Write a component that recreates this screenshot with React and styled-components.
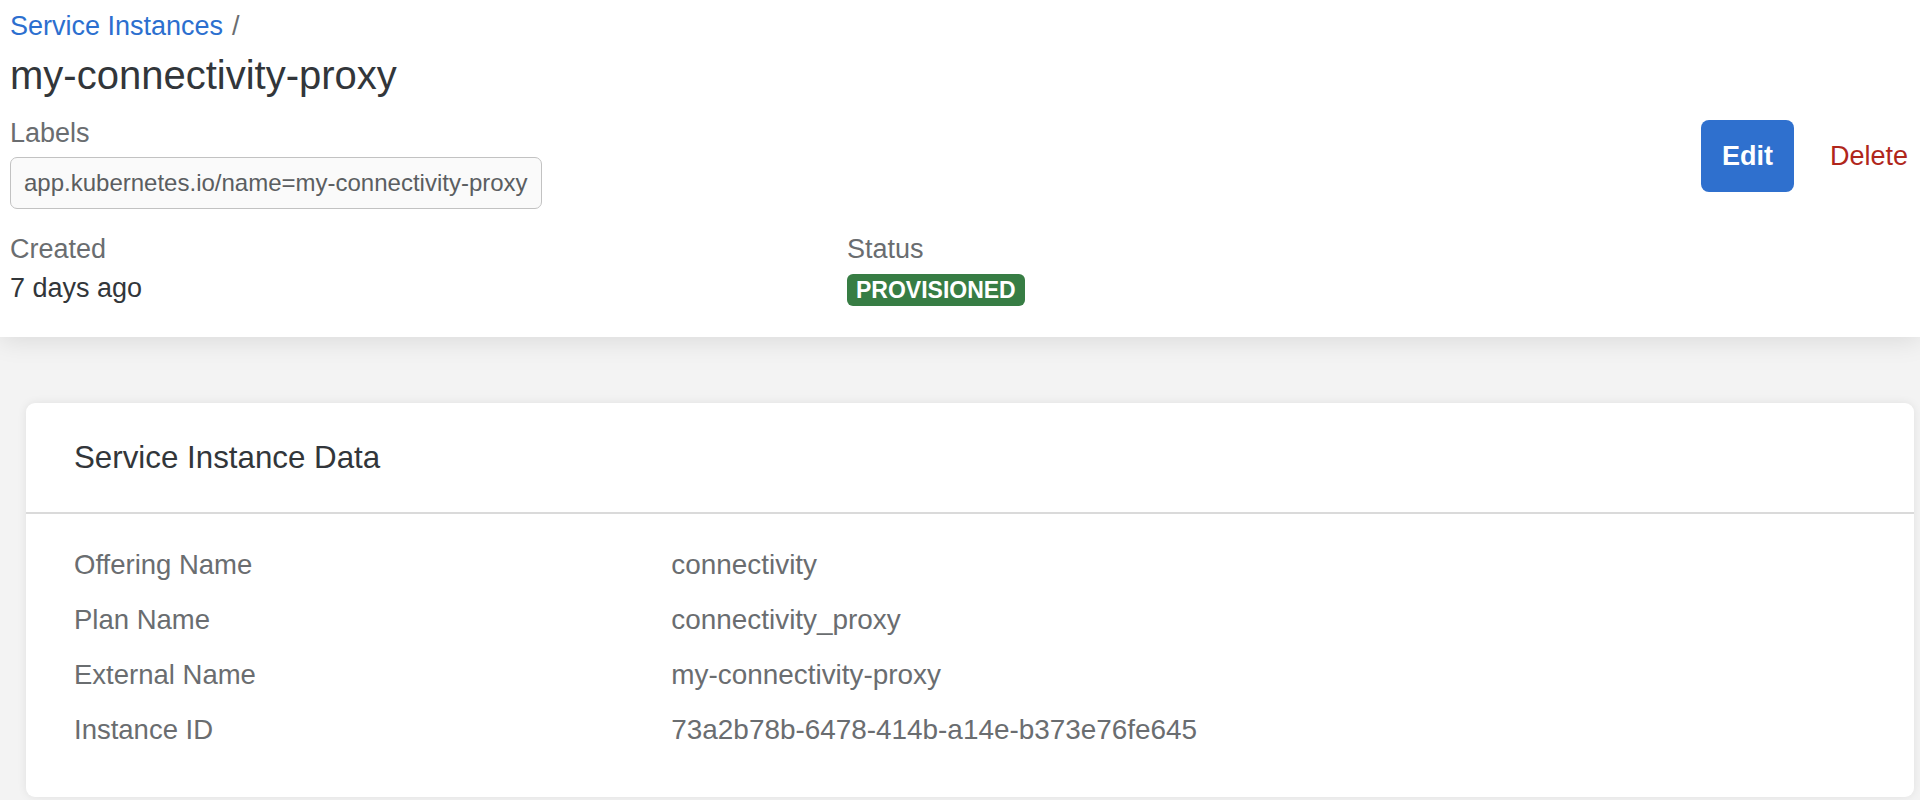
import React from "react";
import styled, { createGlobalStyle } from "styled-components";

const GlobalStyle = createGlobalStyle`
  html, body {
    margin: 0;
    padding: 0;
    overflow: hidden;
    background: #f3f3f3;
  }
  * {
    box-sizing: border-box;
  }
`;

const rows = [
  { label: "Offering Name", value: "connectivity" },
  { label: "Plan Name", value: "connectivity_proxy" },
  { label: "External Name", value: "my-connectivity-proxy" },
  { label: "Instance ID", value: "73a2b78b-6478-414b-a14e-b373e76fe645" },
];

const App = () => {
  return (
    <Page>
      <GlobalStyle />
      <Header>
        <Main>
          <Breadcrumb>
            <Crumb href="#">Service Instances</Crumb>
            <Separator>/</Separator>
          </Breadcrumb>
          <Title>my-connectivity-proxy</Title>
          <FieldLabel $top={18}>Labels</FieldLabel>
          <Chips>
            <Chip>app.kubernetes.io/name=my-connectivity-proxy</Chip>
          </Chips>
          <InfoGrid>
            <Field>
              <FieldLabel>Created</FieldLabel>
              <FieldValue>7 days ago</FieldValue>
            </Field>
            <Field>
              <FieldLabel>Status</FieldLabel>
              <FieldValue>
                <Badge>PROVISIONED</Badge>
              </FieldValue>
            </Field>
          </InfoGrid>
        </Main>
        <Actions>
          <EditButton>Edit</EditButton>
          <DeleteButton>Delete</DeleteButton>
        </Actions>
      </Header>
      <Card>
        <CardHeader>
          <CardTitle>Service Instance Data</CardTitle>
        </CardHeader>
        <CardBody>
          {rows.map((row) => (
            <React.Fragment key={row.label}>
              <RowLabel>{row.label}</RowLabel>
              <RowValue>{row.value}</RowValue>
            </React.Fragment>
          ))}
        </CardBody>
      </Card>
    </Page>
  );
};

const Page = styled.div`
  min-height: 100vh;
  background: #f3f3f3;
  font-family: "Liberation Sans", Arial, sans-serif;
  color: #32363a;
`;
const Header = styled.header`
  position: relative;
  display: flex;
  gap: 17px;
  padding: 10px 12px 29px 10px;
  background: #ffffff;
  box-shadow: 0 4px 24px rgba(0, 0, 0, 0.1);
`;
const Main = styled.div`
  flex: 1;
  display: flex;
  flex-direction: column;
  align-items: flex-start;
`;
const Breadcrumb = styled.nav`
  display: flex;
  gap: 9px;
  font-size: 27px;
  line-height: 32px;
`;
const Crumb = styled.a`
  color: #2c6fcf;
  text-decoration: none;
`;
const Separator = styled.span`
  color: #6a6d70;
`;
const Title = styled.h1`
  margin: 9px 0 0;
  font-size: 40px;
  line-height: 48px;
  font-weight: 400;
  color: #32363a;
`;
const FieldLabel = styled.div`
  margin-top: ${(p) => p.$top || 0}px;
  font-size: 27px;
  line-height: 32px;
  color: #6a6d70;
`;
const Chips = styled.div`
  display: flex;
  gap: 8px;
  margin-top: 8px;
`;
const Chip = styled.span`
  height: 52px;
  padding: 0 13px;
  border: 1px solid #c2c2c2;
  border-radius: 7px;
  background: #fafafa;
  font-size: 24px;
  line-height: 50px;
  color: #5b5e61;
`;
const InfoGrid = styled.div`
  display: grid;
  grid-template-columns: 1fr 1fr;
  width: 100%;
  margin-top: 24px;
`;
const Field = styled.div`
  display: flex;
  flex-direction: column;
`;
const FieldValue = styled.div`
  display: flex;
  align-items: flex-start;
  height: 40px;
  margin-top: 3px;
  font-size: 27px;
  line-height: 40px;
  color: #32363a;
`;
const Badge = styled.span`
  margin-top: 6px;
  padding: 0 9px;
  height: 32px;
  border-radius: 6px;
  background: #377d44;
  color: #ffffff;
  font-size: 23px;
  font-weight: 700;
  line-height: 32px;
`;
const Actions = styled.div`
  display: flex;
  align-items: center;
  align-self: flex-start;
  gap: 36px;
  padding-top: 110px;
`;
const EditButton = styled.button`
  height: 72px;
  padding: 0 21px;
  border: none;
  border-radius: 8px;
  background: #2f70ce;
  color: #ffffff;
  font-family: inherit;
  font-size: 27px;
  font-weight: 700;
  cursor: pointer;
`;
const DeleteButton = styled.button`
  padding: 0;
  border: none;
  background: none;
  color: #b0261b;
  font-family: inherit;
  font-size: 27px;
  cursor: pointer;
`;
const Card = styled.section`
  margin: 66px 6px 0 26px;
  border-radius: 9px;
  background: #ffffff;
  box-shadow: 0 0 10px rgba(0, 0, 0, 0.08);
`;
const CardHeader = styled.div`
  display: flex;
  align-items: center;
  height: 111px;
  padding: 0 48px;
  border-bottom: 2px solid #dadada;
`;
const CardTitle = styled.h2`
  margin: 0;
  font-size: 31.3px;
  line-height: 40px;
  font-weight: 400;
  color: #32363a;
`;
const CardBody = styled.div`
  display: grid;
  grid-template-columns: 1fr 2fr;
  padding: 23px 48px 40px;
  font-size: 27.5px;
  line-height: 55px;
  color: #6a6d70;
`;
const RowLabel = styled.div``;
const RowValue = styled.div`
  font-size: 27.9px;
`;

export default App;
